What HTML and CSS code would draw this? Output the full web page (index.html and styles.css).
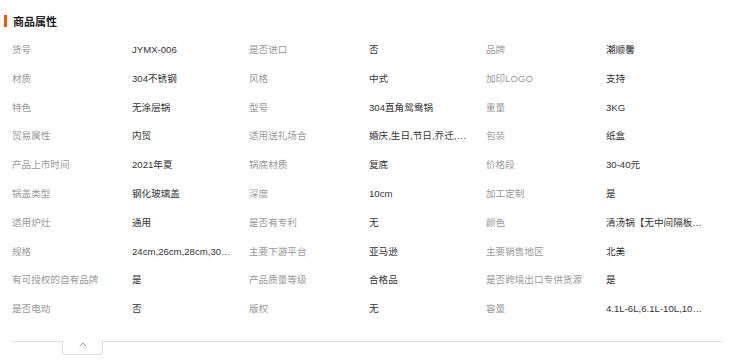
FILE: index.html
```html
<!DOCTYPE html>
<html lang="zh-CN">
<head>
<meta charset="utf-8">
<link rel="stylesheet" href="styles.css">
</head>
<body>
<div class="attrs">
  <div class="head"><span class="bar"></span><h2 class="title">商品属性</h2></div>
  <div class="grid">
    <div class="k">货号</div><div class="v">JYMX-006</div>
    <div class="k">是否进口</div><div class="v">否</div>
    <div class="k">品牌</div><div class="v">潮顺馨</div>

    <div class="k">材质</div><div class="v">304不锈钢</div>
    <div class="k">风格</div><div class="v">中式</div>
    <div class="k">加印LOGO</div><div class="v">支持</div>

    <div class="k">特色</div><div class="v">无涂层锅</div>
    <div class="k">型号</div><div class="v">304直角鸳鸯锅</div>
    <div class="k">重量</div><div class="v">3KG</div>

    <div class="k">贸易属性</div><div class="v">内贸</div>
    <div class="k">适用送礼场合</div><div class="v">婚庆,生日,节日,乔迁,商务</div>
    <div class="k">包装</div><div class="v">纸盒</div>

    <div class="k">产品上市时间</div><div class="v">2021年夏</div>
    <div class="k">锅底材质</div><div class="v">复底</div>
    <div class="k">价格段</div><div class="v">30-40元</div>

    <div class="k">锅盖类型</div><div class="v">钢化玻璃盖</div>
    <div class="k">深度</div><div class="v">10cm</div>
    <div class="k">加工定制</div><div class="v">是</div>

    <div class="k">适用炉灶</div><div class="v">通用</div>
    <div class="k">是否有专利</div><div class="v">无</div>
    <div class="k">颜色</div><div class="v">清汤锅【无中间隔板】,鸳鸯锅</div>

    <div class="k">规格</div><div class="v">24cm,26cm,28cm,30cm,32cm</div>
    <div class="k">主要下游平台</div><div class="v">亚马逊</div>
    <div class="k">主要销售地区</div><div class="v">北美</div>

    <div class="k">有可授权的自有品牌</div><div class="v">是</div>
    <div class="k">产品质量等级</div><div class="v">合格品</div>
    <div class="k">是否跨境出口专供货源</div><div class="v">是</div>

    <div class="k">是否电动</div><div class="v">否</div>
    <div class="k">版权</div><div class="v">无</div>
    <div class="k">容量</div><div class="v">4.1L-6L,6.1L-10L,10L以上</div>
  </div>
  <div class="foot">
    <button class="toggle" type="button" aria-label="收起">
      <svg width="8" height="5" viewBox="0 0 8 5"><path d="M0.8 4.2 L4 1 L7.2 4.2" fill="none" stroke="#9a9a9a" stroke-width="1"/></svg>
    </button>
  </div>
</div>
</body>
</html>
```
FILE: styles.css
```css
* { box-sizing: border-box; }
html, body { margin: 0; padding: 0; background: #fff; }
body {
  font-family: "Liberation Sans", "Noto Sans CJK SC", sans-serif;
  font-size: 9.6px;
  color: #333;
  width: 756px;
  height: 361px;
  overflow: hidden;
}
.attrs { padding: 15px 0 0 0; }
.head {
  display: flex;
  align-items: center;
  height: 12px;
  padding-left: 4px;
}
.bar {
  display: block;
  width: 3px;
  height: 12px;
  background: #ff5000;
}
.title {
  margin: 0 0 0 6px;
  font-family: "Noto Sans CJK SC", sans-serif;
  font-size: 11px;
  font-weight: bold;
  color: #222;
  line-height: 12px;
}
.grid {
  margin: 8.6px 0 0 12px;
  width: 711px;
  display: grid;
  grid-template-columns: 120px 117px 120px 117px 120px 117px;
  grid-auto-rows: 28.8px;
  align-items: center;
}
.k {
  color: #999;
  white-space: nowrap;
  line-height: 14px;
}
.v {
  color: #333;
  white-space: nowrap;
  overflow: hidden;
  text-overflow: ellipsis;
  max-width: 100px;
  line-height: 14px;
}
.foot {
  margin: 17.6px 0 0 12px;
  width: 711px;
  border-top: 1px solid #e3e3e3;
  padding-left: 50px;
}
.toggle {
  display: flex;
  align-items: center;
  justify-content: center;
  width: 41px;
  height: 14px;
  padding: 0 0 6px 0;
  margin: -1px 0 0 0;
  background: #fff;
  border: 1px solid #dcdcdc;
  border-top: none;
  border-radius: 0 0 4px 4px;
}
```
